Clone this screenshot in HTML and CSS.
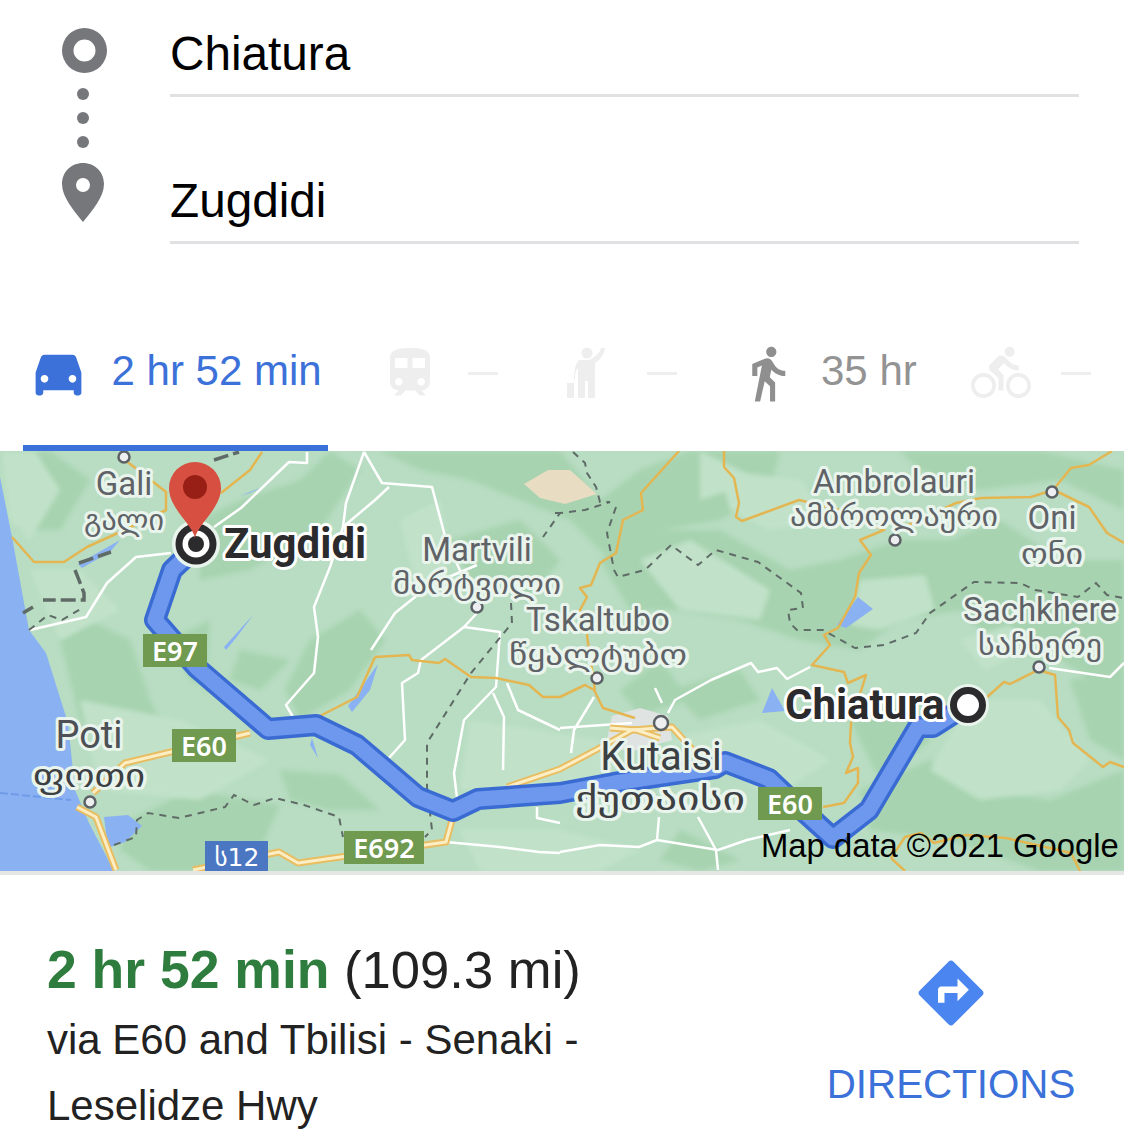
FILE: index.html
```html
<!DOCTYPE html>
<html lang="en">
<head>
<meta charset="utf-8">
<title>Chiatura to Zugdidi</title>
<link rel="stylesheet" href="styles.css">
</head>
<body>
<section class="route">
  <svg class="route-icons" viewBox="62 28 45 194" width="45" height="194">
    <path class="ic-grey" fill-rule="evenodd" d="M84.500 28a22.500 22.500 0 1 0 0 45a22.500 22.500 0 1 0 0-45zM84.500 39.500a11 11 0 1 1 0 22a11 11 0 1 1 0-22z"/>
    <circle class="ic-grey" cx="83" cy="94" r="6"/>
    <circle class="ic-grey" cx="83" cy="118" r="6"/>
    <circle class="ic-grey" cx="83" cy="142" r="6"/>
    <path class="ic-grey" fill-rule="evenodd" d="M83 163c-12 0-21 9-21 21c0 13 12 27 21 38c9-11 21-25 21-38c0-12-9-21-21-21zM83 178a7 7 0 1 1 0 14a7 7 0 1 1 0-14z"/>
  </svg>
  <div class="route-fields">
    <div class="field">Chiatura</div>
    <div class="field">Zugdidi</div>
  </div>
</section>

<nav class="tabs">
  <div class="tab tab-active">
    <svg class="tab-icon ic-blue" viewBox="0 0 24 24"><path fill-rule="evenodd" d="M18.920 6.010C18.720 5.420 18.160 5 17.500 5h-11c-.66 0-1.210.42-1.420 1.010L3 12v8c0 .55.45 1 1 1h1c.55 0 1-.45 1-1v-1h12v1c0 .55.45 1 1 1h1c.55 0 1-.45 1-1v-8l-2.080-5.990zM6.500 16c-.83 0-1.500-.67-1.500-1.500S5.670 13 6.500 13s1.500.67 1.500 1.500S7.330 16 6.500 16zm11 0c-.83 0-1.500-.67-1.500-1.500s.67-1.500 1.500-1.500 1.500.67 1.500 1.500-.67 1.500-1.500 1.500z"/></svg>
    <span class="tab-time">2 hr 52 min</span>
  </div>
  <div class="tab tab-train">
    <svg class="tab-icon ic-off" viewBox="0 0 24 24"><path fill-rule="evenodd" d="M12 2c-4 0-8 .5-8 4v9.500C4 17.430 5.570 19 7.500 19L6 20.500v.5h2.230l2-2H14l2 2h2v-.5L16.500 19c1.930 0 3.500-1.570 3.500-3.500V6c0-3.500-3.580-4-8-4zM7.500 17c-.83 0-1.500-.67-1.500-1.500S6.670 14 7.500 14s1.500.67 1.500 1.500S8.330 17 7.500 17zm3.500-7H6V6h5v4zm2 0V6h5v4h-5zm3.500 7c-.83 0-1.500-.67-1.500-1.500s.67-1.500 1.500-1.500 1.500.67 1.500 1.500-.67 1.500-1.500 1.500z"/></svg>
    <span class="tab-dash"></span>
  </div>
  <div class="tab tab-hail">
    <svg class="tab-icon ic-off" viewBox="556 343 60 60"><circle cx="587" cy="353" r="5.500"/><path d="M579 360h8c3 0 5-1 7-3c4-3 6-5 7-9h4c-1 6-3 10-10 15v35h-7v-17h-3v17h-7v-30c-3 3-3 7-3 11h-1c0-7 1-15 5-19z"/><rect x="567" y="383" width="7" height="15"/></svg>
    <span class="tab-dash"></span>
  </div>
  <div class="tab tab-walk">
    <svg class="tab-icon ic-walk" viewBox="0 0 24 24"><path d="M13.500 5.500c1.100 0 2-.9 2-2s-.9-2-2-2-2 .9-2 2 .9 2 2 2zM9.800 8.900L7 23h2.100l1.800-8 2.100 2v6h2v-7.500l-2.100-2 .6-3C14.800 12 16.800 13 19 13v-2c-1.900 0-3.500-1-4.300-2.400l-1-1.600c-.4-.6-1-1-1.700-1-.3 0-.5.1-.8.1L6 8.300V13h2V9.600l1.800-.7"/></svg>
    <span class="tab-time tab-time-walk">35 hr</span>
  </div>
  <div class="tab tab-bike">
    <svg class="tab-icon ic-off" viewBox="0 0 24 24"><path d="M15.500 5.500c1.100 0 2-.9 2-2s-.9-2-2-2-2 .9-2 2 .9 2 2 2zM5 12c-2.800 0-5 2.200-5 5s2.200 5 5 5 5-2.200 5-5-2.200-5-5-5zm0 8.500c-1.900 0-3.500-1.600-3.500-3.500s1.600-3.500 3.500-3.500 3.500 1.600 3.500 3.500-1.600 3.500-3.500 3.500zm5.800-10l2.400-2.400.8.8c1.300 1.300 3 2.100 5.100 2.100V9c-1.500 0-2.700-.6-3.600-1.500l-1.900-1.900c-.5-.4-1-.6-1.600-.6s-1.100.2-1.400.6L7.800 8.400c-.4.4-.6.9-.6 1.400 0 .6.2 1.100.6 1.400L11 14v5h2v-6.200l-2.200-2.300zM19 12c-2.800 0-5 2.200-5 5s2.200 5 5 5 5-2.200 5-5-2.200-5-5-5zm0 8.500c-1.900 0-3.500-1.600-3.500-3.500s1.600-3.500 3.500-3.500 3.500 1.600 3.500 3.500-1.600 3.500-3.500 3.500z"/></svg>
    <span class="tab-dash"></span>
  </div>
</nav>

<figure class="map">
<svg class="map-svg" viewBox="0 451 1124 420" width="1124" height="420">
  <rect class="land" x="0" y="451" width="1124" height="420"/>

  <g class="t-d">
    <polygon points="380,451 480,451 560,451 600,500 640,470 690,451 780,451 770,490 720,520 660,530 610,560 570,520 520,500 470,480 420,470"/>
    <polygon points="600,560 660,530 720,530 790,570 840,560 900,540 950,540 1000,520 1060,560 1124,560 1124,700 1060,660 1000,650 960,610 900,620 860,650 800,640 740,620 680,610 630,610"/>
    <polygon points="900,451 1040,451 1124,470 1124,510 1060,480 980,490 920,470"/>
    <polygon points="450,540 520,520 560,560 530,600 470,580"/>
    <polygon points="310,640 360,610 385,640 350,690 300,720 285,690"/>
    <polygon points="170,640 210,620 205,690 240,700 190,680"/>
    <polygon points="240,650 290,660 260,690 230,680"/>
    <polygon points="130,820 190,790 280,805 260,850 200,871 150,871 120,850"/>
    <polygon points="60,640 90,620 130,640 150,700 180,760 120,760 80,720"/>
    <polygon points="280,770 340,775 380,810 330,810 290,800"/>
    <polygon points="670,690 740,670 760,700 700,720"/>
    <polygon points="620,690 660,660 690,700 640,715"/>
    <polygon points="860,790 930,760 990,790 1050,800 1124,770 1124,871 1040,871 950,840 870,830"/>
    <polygon points="1070,680 1124,670 1124,760 1090,740"/>
    <polygon points="200,520 240,500 300,480 330,451 360,470 320,530 250,570 200,580"/>
    <polygon points="0,451 50,451 90,480 60,530 20,530"/>
    <polygon points="680,830 740,860 700,871 660,860"/>
    <polygon points="850,720 900,700 930,740 880,780"/>
  </g>
  <g class="t-l">
    <polygon points="640,560 690,540 770,590 760,620 680,610"/>
    <polygon points="720,470 800,480 830,520 770,530 730,510"/>
    <polygon points="860,580 925,575 935,610 880,630 850,625"/>
    <polygon points="970,700 1040,700 1090,760 1060,790 980,800 930,770"/>
    <polygon points="660,740 760,720 830,760 770,800 720,760"/>
    <polygon points="960,640 1010,625 1030,650 985,670"/>
    <polygon points="470,720 600,740 640,800 540,790 460,790"/>
    <polygon points="80,700 180,720 270,760 200,800 100,790"/>
    <polygon points="460,830 560,830 640,850 600,871 480,871"/>
    <polygon points="0,451 35,451 60,490 30,540 10,520"/>
    <polygon points="30,570 80,570 120,610 60,640"/>
    <polygon points="400,520 440,500 450,560 420,600"/>
    <polygon points="700,451 760,480 700,500"/>
  </g>

  <path class="sea" d="M0 477L12 537L29 630L46 653L68 723L75 790L89 823L114 871H0z"/>
  <path class="sea" d="M104 817L128 815L142 826L125 842L108 848z"/>
  <path class="sea" d="M837 625L858 597L873 609L846 628z"/>
  <path class="sea" d="M772 688L785 711L762 713z"/>
  <path class="sea" d="M224 647L254 614L236 638L226 650z"/>
  <path class="sea" d="M348 706L378 664L370 690L352 712z"/>
  <path class="sea" d="M240 496L270 484L250 493z"/>
  <path class="sea" d="M78 564L120 540L110 552L82 568z"/>
  <path class="sea" d="M312 738L318 758L310 745z"/>
  <path class="sand" d="M524 484L548 470L570 470L597 494L565 504L540 498z"/>
  <path class="sea-line" d="M0 793L71 800"/>
  <path class="urban" d="M612 716L640 708L668 716L672 740L630 752L606 745z"/>

  <g class="road-w">
    <path d="M364 452L382 483L432 487L446 540L475 603"/>
    <path d="M389 487L375 500L343 527L330 567L314 607L318 637L314 673L286 705L293 717"/>
    <path d="M307 452L307 463L289 462L241 508L214 527"/>
    <path d="M364 452L346 503L343 527"/>
    <path d="M30 630L86 617L107 583L136 557L171 553"/>
    <path d="M477 613L464 627L421 660L418 673L402 683L405 740L389 758"/>
    <path d="M371 650L395 613L430 585L477 565"/>
    <path d="M464 627L500 632L496 687L464 720L454 773L457 798"/>
    <path d="M493 693L504 717L503 770"/>
    <path d="M507 683L518 710L560 730"/>
    <path d="M560 728L632 723"/>
    <path d="M594 697L574 730L571 753"/>
    <path d="M655 688L662 703"/>
    <path d="M668 713L675 700L711 680L751 663L758 672L777 668L787 679L810 667"/>
    <path d="M560 852L600 845L639 847L657 840L718 850L747 840L790 830"/>
    <path d="M659 817L657 840M698 817L716 850L718 870"/>
    <path d="M1049 668L1110 677L1124 663"/>
    <path d="M446 842L500 847L539 852L560 853"/>
    <path d="M537 807L537 818L560 823"/>
  </g>
  <g class="road-o">
    <path d="M12 537L34 562L64 562L87 547L118 533L166 510L166 492L125 460"/>
    <path d="M262 452L250 470L221 493"/>
    <path d="M375 657L409 655L412 660L439 663L445 659L471 677L496 678L529 685L543 697L560 697L585 685L594 690L603 708L635 718"/>
    <path d="M375 657L357 697L318 717"/>
    <path d="M679 451L641 493L643 510L623 520L616 553L600 563L591 585L580 588L587 597L580 610L585 620L589 650L595 690"/>
    <path d="M724 451L724 467L734 478L739 503L736 517L742 521L799 500L840 510L884 530L860 540L871 555L859 573L855 597L838 628"/>
    <path d="M1112 451L1089 465L1071 468L1053 490L1031 497L981 498L956 503L902 528"/>
    <path d="M1058 492L1089 507L1107 533L1124 543"/>
    <path d="M838 628L824 635L830 645L812 665L844 672L848 683L866 675L851 723L850 743L853 757L846 773L858 768L858 783L844 803L823 807"/>
    <path d="M986 698L1004 682L1010 684L1038 670L1055 675L1058 717L1069 730L1073 743L1103 767L1110 762L1124 767"/>
    <path d="M891 858L905 837L921 833L934 843L966 835L1006 838L1071 853L1080 871M891 858L905 871"/>
  </g>
  <g class="road-h">
    <path d="M193 870L279 852L298 863L446 842L452 820"/>
    <path d="M93 793L125 763L250 733"/>
    <path d="M77 807L96 817L116 870"/>
    <path d="M507 787L560 769L596 750L632 730L672 727L693 750"/>
    <path d="M610 728L636 730L660 738"/>
  </g>
  <g class="road-hc">
    <path d="M193 870L279 852L298 863L446 842L452 820"/>
    <path d="M93 793L125 763L250 733"/>
    <path d="M77 807L96 817L116 870"/>
    <path d="M507 787L560 769L596 750L632 730L672 727L693 750"/>
    <path d="M610 728L636 730L660 738"/>
  </g>
  <g class="road-d">
    <path d="M573 452L585 463L587 473L596 487L600 502L610 502L585 510L560 513L543 537M555 513L560 513"/>
    <path d="M616 507L607 533L614 570L618 577L645 570L671 545L698 565L716 550L758 562L776 575L801 593L803 608L788 610L790 623L797 630L823 630L855 648L884 645L916 633L930 613L974 582L1020 583L1035 590L1078 597L1096 583L1107 595L1124 598"/>
    <path d="M511 603L512 623L471 673L427 743L427 787L432 830L425 837"/>
    <path d="M114 845L136 837L137 820L148 813L179 818L225 807L234 795L254 805L275 798L304 805L339 817L343 837"/>
    <path d="M29 630L48 615L62 620L84 607"/>
  </g>
  <g class="road-b">
    <path d="M214 460L239 452"/>
    <path d="M79 563L111 552"/>
    <path d="M75 570L84 593L84 600L43 600M33 607L23 613"/>
  </g>

  <g class="route-line">
    <path class="route-edge" d="M190 553L172 570L155 620L197 668L268 729L316 725L357 745L418 797L453 811L478 799L560 793L614 783L715 768L725 762L769 779L790 799L833 838L869 810L918 727L933 727L966 706"/>
    <path class="route-fill" d="M190 553L172 570L155 620L197 668L268 729L316 725L357 745L418 797L453 811L478 799L560 793L614 783L715 768L725 762L769 779L790 799L833 838L869 810L918 727L933 727L966 706"/>
  </g>

  <g class="shield">
    <rect x="143" y="634" width="64" height="33"/><text x="175" y="661">E97</text>
    <rect x="172" y="729" width="64" height="33"/><text x="204" y="756">E60</text>
    <rect x="344" y="831" width="80" height="33"/><text x="384" y="858">E692</text>
    <rect x="758" y="787" width="64" height="33"/><text x="790" y="814">E60</text>
  </g>
  <g class="shield shield-blue">
    <rect x="205" y="841" width="63" height="30"/><text x="237" y="866">ს12</text>
  </g>

  <g class="city">
    <circle cx="124" cy="457" r="5.500"/>
    <circle cx="90" cy="802" r="5.500"/>
    <circle cx="477" cy="607" r="5.500"/>
    <circle cx="597" cy="678" r="5.500"/>
    <circle cx="661" cy="723" r="7"/>
    <circle cx="895" cy="540" r="5.500"/>
    <circle cx="1052" cy="492" r="5.500"/>
    <circle cx="1039" cy="667" r="5.500"/>
  </g>

  <g class="lbl">
    <text x="124" y="495">Gali</text>
    <text class="ka" x="124" y="530" textLength="80" lengthAdjust="spacingAndGlyphs">გალი</text>
    <text x="477" y="561">Martvili</text>
    <text class="ka" x="477" y="594" textLength="168" lengthAdjust="spacingAndGlyphs">მარტვილი</text>
    <text x="598" y="631">Tskaltubo</text>
    <text class="ka" x="598" y="665" textLength="178" lengthAdjust="spacingAndGlyphs">წყალტუბო</text>
    <text x="894" y="493">Ambrolauri</text>
    <text class="ka" x="894" y="526" textLength="208" lengthAdjust="spacingAndGlyphs">ამბროლაური</text>
    <text x="1052" y="529">Oni</text>
    <text class="ka" x="1052" y="564" textLength="62" lengthAdjust="spacingAndGlyphs">ონი</text>
    <text x="1040" y="621">Sachkhere</text>
    <text class="ka" x="1040" y="655" textLength="124" lengthAdjust="spacingAndGlyphs">საჩხერე</text>
    <text class="lbl-big" x="89" y="748">Poti</text>
    <text class="ka ka-big" x="89" y="787" textLength="112" lengthAdjust="spacingAndGlyphs">ფოთი</text>
    <text class="lbl-big lbl-kutaisi" x="661" y="770">Kutaisi</text>
    <text class="ka ka-big" x="660" y="810" textLength="170" lengthAdjust="spacingAndGlyphs">ქუთაისი</text>
  </g>

  <g class="lbl-place">
    <text x="224" y="558">Zugdidi</text>
    <text x="785" y="719">Chiatura</text>
  </g>

  <circle class="end-halo" cx="196" cy="544" r="24"/>
  <circle class="end-ring" cx="196" cy="544" r="17"/>
  <circle class="end-core" cx="196" cy="544" r="8"/>
  <circle class="end-halo" cx="968" cy="705" r="21"/>
  <circle class="start-ring" cx="968" cy="705" r="14.500"/>

  <path class="pin" d="M195 538c-3-14-26-30-26-50a26 26 0 1 1 52 0c0 20-23 36-26 50z"/>
  <circle class="pin-core" cx="195" cy="487" r="12"/>

  <text class="credit" x="761" y="857">Map data ©2021 Google</text>
</svg>
</figure>

<section class="summary">
  <div class="summary-text">
    <p class="summary-head"><strong class="summary-time">2 hr 52 min</strong> (109.3 mi)</p>
    <p class="summary-via">via E60 and Tbilisi - Senaki - Leselidze Hwy</p>
  </div>
  <div class="directions">
    <svg class="directions-icon" viewBox="0 0 24 24"><path d="M21.710 11.290l-9-9c-.39-.39-1.020-.39-1.410 0l-9 9c-.39.39-.39 1.020 0 1.410l9 9c.39.39 1.020.39 1.410 0l9-9c.39-.38.39-1.010 0-1.410zM14 14.500V12h-4v3H8v-4c0-.55.45-1 1-1h5V7.500l3.500 3.500-3.500 3.500z"/></svg>
    <span class="directions-label">DIRECTIONS</span>
  </div>
</section>
</body>
</html>
```

FILE: styles.css
```css
* { box-sizing: border-box; }
html, body { margin: 0; padding: 0; background: #fff; }
body { width: 1124px; height: 1146px; overflow: hidden; font-family: "Liberation Sans", Arial, sans-serif; }
p { margin: 0; }

.route { display: flex; align-items: flex-start; padding-left: 62px; padding-right: 45px; }
.route-icons { flex: none; margin-top: 28px; margin-right: 63px; }
.ic-grey { fill: #75777b; }
.route-fields { flex: 1; display: flex; flex-direction: column; gap: 50px; }
.field { padding: 26px 0 12px; font-size: 47.700px; line-height: 56px; color: #000; border-bottom: 3px solid #e1e1e4; }

.tabs { display: flex; align-items: flex-start; height: 108px; margin-top: 99px; padding-left: 23px; }
.tab { display: flex; align-items: flex-start; height: 108px; flex: none; }
.tab-active { width: 305px; padding-left: 5px; border-bottom: 6px solid #3b71d9; gap: 22.500px; }
.tab-train { margin-left: 52px; gap: 28px; }
.tab-hail { margin-left: 58px; gap: 31px; }
.tab-walk { margin-left: 60px; gap: 23px; }
.tab-bike { margin-left: 54px; gap: 30px; }
.tab-icon { flex: none; width: 60px; height: 60px; }
.ic-blue { fill: #3b71d9; width: 61px; height: 61px; margin-top: -1px; }
.ic-off { fill: #eeeeee; }
.ic-walk { fill: #8f8f8f; width: 61px; height: 61px; }
.tab-time { font-size: 42px; line-height: 56px; color: #3b71d9; white-space: nowrap; }
.tab-time-walk { color: #939393; }
.tab-dash { width: 30px; height: 3px; margin-top: 29px; background: #eeeeee; }

.map { margin: 0; height: 424px; border-bottom: 4px solid #e4e7e4; }
.map-svg { display: block; }
.land { fill: #b8ddc2; }
.t-d { filter: blur(2.500px); }
.t-l { filter: blur(2.500px); }
.t-d polygon { fill: #a7d3b0; }
.t-l polygon { fill: #c1e2c9; }
.sea { fill: #8ab1f2; }
.sand { fill: #e8dcc3; }
.urban { fill: #dfe4e2; }
.sea-line { fill: none; stroke: #6f9be8; stroke-width: 2; stroke-dasharray: 8 3; }
.road-w path { fill: none; stroke: #fff; stroke-width: 2.500; stroke-linejoin: round; }
.road-o path { fill: none; stroke: #e4b652; stroke-width: 2.500; stroke-linejoin: round; }
.road-h path { fill: none; stroke: #e9bd62; stroke-width: 7; stroke-linejoin: round; }
.road-hc path { fill: none; stroke: #fbeec4; stroke-width: 3; stroke-linejoin: round; }
.road-d path { fill: none; stroke: #5f6b66; stroke-width: 2; stroke-dasharray: 7 6; }
.road-b path { fill: none; stroke: #5f6b66; stroke-width: 3.500; stroke-dasharray: 15 5; }
.route-line path { fill: none; stroke-linejoin: round; stroke-linecap: round; }
.route-edge { stroke: #3a6bd3; stroke-width: 22; }
.route-fill { stroke: #6e98ee; stroke-width: 15; }

.shield rect { fill: #6f9a4f; }
.shield-blue rect { fill: #4a76c2; }
.shield text { font-family: "Noto Sans", sans-serif; font-size: 27px; font-weight: 600; fill: #fff; text-anchor: middle; }
.shield-blue text { font-weight: 400; font-family: "DejaVu Sans", sans-serif; font-size: 25px; }

.city circle { fill: #eceef0; stroke: #5c6166; stroke-width: 2.500; }

.lbl text { font-family: Roboto, sans-serif; font-size: 33px; fill: #5f6368; text-anchor: middle; paint-order: stroke; stroke: #e9f4ec; stroke-width: 6px; stroke-linejoin: round; }
.lbl .ka { font-family: "DejaVu Sans", sans-serif; font-size: 29px; }
.lbl .lbl-big { font-size: 38px; fill: #4d5156; }
.lbl .lbl-kutaisi { font-size: 40px; fill: #3c4043; }
.lbl .ka-big { font-size: 33px; fill: #3c4043; }
.lbl-place text { font-family: Roboto, sans-serif; font-size: 42px; font-weight: 700; fill: #2b2b2d; paint-order: stroke; stroke: #fff; stroke-width: 6px; stroke-linejoin: round; }

.end-halo { fill: #e9f4ec; }
.end-ring { fill: #fff; stroke: #2b2b2d; stroke-width: 7; }
.end-core { fill: #2b2b2d; }
.start-ring { fill: #fff; stroke: #2b2b2d; stroke-width: 7; }
.pin { fill: #d64f40; }
.pin-core { fill: #981f16; }
.credit { font-family: "Liberation Sans", sans-serif; font-size: 32.800px; fill: #000; }

.summary { display: flex; justify-content: space-between; align-items: flex-start; padding: 62px 49px 0 47px; }
.summary-text { width: 560px; }
.summary-head { font-size: 52.600px; line-height: 66px; color: #222; white-space: nowrap; }
.summary-time { font-size: 53.500px; color: #2f7d3e; }
.summary-via { margin-top: 4px; font-size: 42px; line-height: 66px; color: #222; }
.directions { display: flex; flex-direction: column; align-items: center; width: 248px; margin-top: 17px; }
.directions-icon { width: 78px; height: 78px; fill: #4a85f0; }
.directions-label { margin-top: 30px; font-size: 40.300px; line-height: 46px; color: #3b71d9; white-space: nowrap; }
```
